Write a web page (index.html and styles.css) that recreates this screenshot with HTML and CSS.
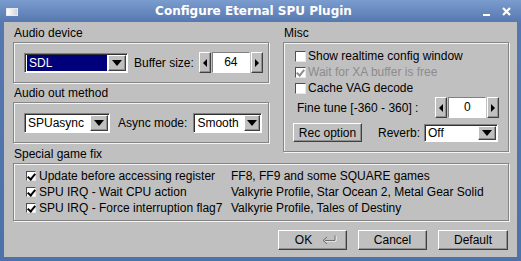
FILE: index.html
```html
<!DOCTYPE html>
<html lang="en">
<head>
    <meta charset="UTF-8">
    <title>Configure Eternal SPU Plugin</title>
    <link rel="stylesheet" href="styles.css">
</head>
<body>
    <div class="window">
        <div class="titlebar">
            <span class="win-icon"></span>
            <span class="title">Configure Eternal SPU Plugin</span>
            <span class="win-controls">
                <span class="minimize"></span>
                <svg class="close" width="9" height="9" viewBox="0 0 9 9"><path d="M1 1 L8 8 M8 1 L1 8" stroke="#fff" stroke-width="2.2"/></svg>
            </span>
        </div>
        <div class="client">
            <div class="top">
                <div class="col-left">
                    <div class="group-label">Audio device</div>
                    <div class="frame frame-device">
                        <div class="combo combo-sdl">
                            <span class="combo-value selected">SDL</span>
                            <span class="combo-btn"><span class="arrow-down"></span></span>
                        </div>
                        <span class="field-label buffer-label">Buffer size:</span>
                        <div class="spin">
                            <span class="spin-btn"><span class="arrow-left"></span></span>
                            <span class="spin-value">64</span>
                            <span class="spin-btn"><span class="arrow-right"></span></span>
                        </div>
                    </div>
                    <div class="group-label method-label">Audio out method</div>
                    <div class="frame frame-method">
                        <div class="combo combo-out">
                            <span class="combo-value">SPUasync</span>
                            <span class="combo-btn"><span class="arrow-down"></span></span>
                        </div>
                        <span class="field-label async-label">Async mode:</span>
                        <div class="combo combo-smooth">
                            <span class="combo-value">Smooth</span>
                            <span class="combo-btn"><span class="arrow-down"></span></span>
                        </div>
                    </div>
                </div>
                <div class="col-right">
                    <div class="group-label">Misc</div>
                    <div class="frame frame-misc">
                        <label class="check-row"><span class="check"></span>Show realtime config window</label>
                        <label class="check-row disabled"><span class="check checked"></span>Wait for XA buffer is free</label>
                        <label class="check-row"><span class="check"></span>Cache VAG decode</label>
                        <div class="tune-row">
                            <span class="field-label">Fine tune [-360 - 360] :</span>
                            <div class="spin spin-tune">
                                <span class="spin-btn"><span class="arrow-left"></span></span>
                                <span class="spin-value">0</span>
                                <span class="spin-btn"><span class="arrow-right"></span></span>
                            </div>
                        </div>
                        <div class="rec-row">
                            <button class="btn btn-rec">Rec option</button>
                            <span class="field-label reverb-label">Reverb:</span>
                            <div class="combo combo-reverb">
                                <span class="combo-value">Off</span>
                                <span class="combo-btn"><span class="arrow-down"></span></span>
                            </div>
                        </div>
                    </div>
                </div>
            </div>

            <div class="group-label special-label">Special game fix</div>
            <div class="frame frame-special">
                <div class="fix-row">
                    <label class="fix-name"><span class="check small checked"></span>Update before accessing register</label>
                    <span class="fix-games">FF8, FF9 and some SQUARE games</span>
                </div>
                <div class="fix-row">
                    <label class="fix-name"><span class="check small checked"></span>SPU IRQ - Wait CPU action</label>
                    <span class="fix-games">Valkyrie Profile, Star Ocean 2, Metal Gear Solid</span>
                </div>
                <div class="fix-row">
                    <label class="fix-name"><span class="check small checked"></span>SPU IRQ - Force interruption flag7</label>
                    <span class="fix-games">Valkyrie Profile, Tales of Destiny</span>
                </div>
            </div>

            <div class="actions">
                <button class="btn btn-action btn-ok">OK
                    <svg class="enter-icon" width="17" height="10" viewBox="0 0 17 10"><path d="M15 1 V6 H4" fill="none" stroke="#fff" stroke-width="1"/><path d="M14 0.5 V5.5 H4" fill="none" stroke="#6e6e6e" stroke-width="1"/><path d="M6 2 L2 5.5 L6 9" fill="none" stroke="#6e6e6e" stroke-width="1"/></svg>
                </button>
                <button class="btn btn-action">Cancel</button>
                <button class="btn btn-action btn-default">Default</button>
            </div>
        </div>
    </div>
</body>
</html>
```

FILE: styles.css
```css
* {
    box-sizing: border-box;
}
body {
    margin: 0;
    width: 521px;
    height: 261px;
    overflow: hidden;
    font-family: "Liberation Sans", Arial, sans-serif;
    font-size: 12px;
    color: #000;
}
.window {
    width: 521px;
    height: 261px;
    background: linear-gradient(#7b9cce, #5578b0 22px, #4d71a9);
    padding: 0 4px 4px 4px;
    display: flex;
    flex-direction: column;
}
.titlebar {
    height: 22px;
    display: flex;
    align-items: center;
}
.win-icon {
    width: 12px;
    height: 8px;
    margin: 1px 0 0 2px;
    background: linear-gradient(90deg, #ffffff, #d0d4dc);
    border: 1px solid #e8eaf0;
}
.title {
    flex: 1;
    text-align: center;
    font-family: "DejaVu Sans", sans-serif;
    font-weight: bold;
    font-size: 12px;
    color: #fff;
    padding-left: 6px;
}
.win-controls {
    display: flex;
    align-items: center;
    gap: 12px;
    margin-right: 6px;
}
.minimize {
    width: 7px;
    height: 2px;
    background: #fff;
    margin-top: 8px;
}
.close {
    display: block;
}
.client {
    flex: 1;
    background: #c0c0c0;
    padding: 4px 8px 0 9px;
}
.top {
    display: flex;
    gap: 14px;
}
.col-left {
    width: 256px;
}
.col-right {
    width: 226px;
}
.group-label {
    height: 16px;
    line-height: 15px;
    padding-left: 1px;
}
.frame {
    border: 1px solid #858585;
    box-shadow: 1px 1px 0 #f4f4f4, inset 1px 1px 0 #f4f4f4;
}
.frame-device, .frame-method {
    height: 41px;
    display: flex;
    align-items: center;
    padding-left: 10px;
}
.method-label {
    margin-top: 3px;
}
.field-label {
    white-space: nowrap;
}

/* combo boxes */
.combo {
    display: flex;
    height: 20px;
    background: #fff;
    border: 1px solid;
    border-color: #808080 #fff #fff #808080;
    box-shadow: inset 1px 1px 0 #303030;
    padding: 1px 1px 1px 2px;
    align-items: stretch;
}
.combo-value {
    flex: 1;
    line-height: 16px;
    padding-left: 1px;
    white-space: nowrap;
    overflow: hidden;
}
.combo-value.selected {
    background: #00007b;
    color: #fff;
    padding-left: 2px;
}
.combo-btn {
    width: 18px;
    flex-shrink: 0;
    background: #c0c0c0;
    border: 1px solid;
    border-color: #fff #404040 #404040 #fff;
    box-shadow: inset -1px -1px 0 #909090;
    display: flex;
    align-items: center;
    justify-content: center;
    margin-left: 1px;
}
.arrow-down {
    width: 0;
    height: 0;
    border-left: 5px solid transparent;
    border-right: 5px solid transparent;
    border-top: 6px solid #000;
}
.combo-sdl {
    width: 104px;
}
.buffer-label {
    margin-left: 6px;
}
.combo-out {
    width: 86px;
}
.async-label {
    margin-left: 8px;
}
.combo-smooth {
    width: 69px;
    margin-left: 6px;
}
.combo-smooth .combo-btn {
    width: 16px;
}

/* spinners */
.spin {
    display: flex;
    height: 21px;
    width: 64px;
    margin-left: 5px;
}
.spin-btn {
    width: 12px;
    background: #c0c0c0;
    border: 1px solid;
    border-color: #fff #404040 #404040 #fff;
    box-shadow: inset -1px -1px 0 #909090;
    display: flex;
    align-items: center;
    justify-content: center;
}
.spin-value {
    flex: 1;
    background: #fff;
    text-align: center;
    line-height: 19px;
    border: 1px solid;
    border-color: #808080 #fff #fff #808080;
    margin: 0 1px;
}
.arrow-left, .arrow-right {
    width: 0;
    height: 0;
    border-top: 4px solid transparent;
    border-bottom: 4px solid transparent;
}
.arrow-left {
    border-right: 4px solid #000;
}
.arrow-right {
    border-left: 4px solid #000;
}

/* misc */
.frame-misc {
    height: 110px;
    padding: 5px 0 0 11px;
}
.check-row {
    display: flex;
    align-items: center;
    height: 16px;
    white-space: nowrap;
}
.check-row.disabled {
    color: #8c8c8c;
}
.check {
    width: 11px;
    height: 11px;
    background: #fff;
    border: 1px solid;
    border-color: #505050 #e8e8e8 #e8e8e8 #505050;
    margin-right: 2px;
    flex-shrink: 0;
    position: relative;
}
.check.small {
    width: 10px;
    height: 10px;
}
.check.checked::after {
    content: "";
    position: absolute;
    left: 2px;
    top: 0px;
    width: 3px;
    height: 6px;
    border: solid #000;
    border-width: 0 2px 2px 0;
    transform: rotate(40deg);
}
.disabled .check.checked::after {
    border-color: #8c8c8c;
}
.tune-row {
    display: flex;
    align-items: center;
    height: 21px;
    margin-top: 1px;
    padding-left: 2px;
}
.spin-tune {
    margin-left: 17px;
}
.rec-row {
    display: flex;
    align-items: center;
    height: 21px;
    margin-top: 4px;
}
.btn {
    font-family: "Liberation Sans", Arial, sans-serif;
    font-size: 12px;
    background: #c0c0c0;
    border: 1px solid;
    border-color: #fff #404040 #404040 #fff;
    box-shadow: inset -1px -1px 0 #909090;
    padding: 0;
    color: #000;
}
.btn-rec {
    width: 69px;
    height: 19px;
    margin-left: -2px;
}
.reverb-label {
    margin-left: 16px;
}
.combo-reverb {
    width: 74px;
    height: 18px;
    margin-left: 4px;
}
.combo-reverb .combo-value {
    line-height: 14px;
}

/* special game fix */
.special-label {
    margin-top: -5px;
}
.frame-special {
    height: 58px;
    padding: 4px 0 0 11px;
}
.fix-row {
    display: flex;
    align-items: center;
    height: 16px;
    white-space: nowrap;
}
.fix-name {
    display: flex;
    align-items: center;
    width: 206px;
}
.fix-name .check {
    margin-left: 1px;
    margin-right: 3px;
}

/* buttons */
.actions {
    display: flex;
    justify-content: flex-end;
    gap: 11px;
    margin-top: 9px;
    padding-right: 1px;
}
.btn-action {
    width: 69px;
    height: 20px;
}
.btn-ok {
    display: flex;
    align-items: center;
    justify-content: center;
    gap: 9px;
    padding-left: 8px;
}
.btn-default {
    width: 70px;
}
.enter-icon {
    display: block;
}
```
